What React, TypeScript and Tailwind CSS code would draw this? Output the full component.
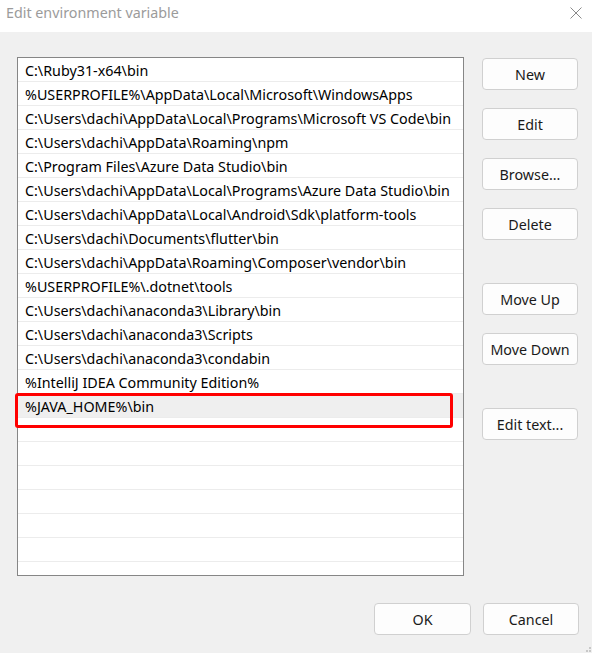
import React from "react";

const paths = [
  "C:\\Ruby31-x64\\bin",
  "%USERPROFILE%\\AppData\\Local\\Microsoft\\WindowsApps",
  "C:\\Users\\dachi\\AppData\\Local\\Programs\\Microsoft VS Code\\bin",
  "C:\\Users\\dachi\\AppData\\Roaming\\npm",
  "C:\\Program Files\\Azure Data Studio\\bin",
  "C:\\Users\\dachi\\AppData\\Local\\Programs\\Azure Data Studio\\bin",
  "C:\\Users\\dachi\\AppData\\Local\\Android\\Sdk\\platform-tools",
  "C:\\Users\\dachi\\Documents\\flutter\\bin",
  "C:\\Users\\dachi\\AppData\\Roaming\\Composer\\vendor\\bin",
  "%USERPROFILE%\\.dotnet\\tools",
  "C:\\Users\\dachi\\anaconda3\\Library\\bin",
  "C:\\Users\\dachi\\anaconda3\\Scripts",
  "C:\\Users\\dachi\\anaconda3\\condabin",
  "%IntelliJ IDEA Community Edition%",
  "%JAVA_HOME%\\bin",
];

const selected = 14;

function Btn({ label, className = "" }: { label: string; className?: string }) {
  return (
    <button
      className={`flex h-[32px] w-[96px] items-center justify-center rounded-[4px] border border-[#d0d0d0] bg-[#fdfdfd] pt-[2px] text-[14.3px] text-[#1a1a1a] ${className}`}
    >
      {label}
    </button>
  );
}

export default function App() {
  return (
    <div
      className="flex h-[653px] w-[592px] flex-col bg-[#f0f0f0]"
      style={{ fontFamily: '"Noto Sans", "Liberation Sans", sans-serif' }}
    >
      {/* title bar */}
      <div className="flex h-[32px] items-start justify-between bg-white pl-[6px] pr-[10px]">
        <span className="pt-[3px] text-[14.3px] leading-[20px] text-[#9b9b9b]">Edit environment variable</span>
        <svg width="12" height="12" viewBox="0 0 12 12" className="mt-[7px]">
          <path d="M0.5 0.5 L11.5 11.5 M11.5 0.5 L0.5 11.5" stroke="#8a8a8a" strokeWidth="1" />
        </svg>
      </div>

      <div className="flex flex-1 flex-col">
        <div className="flex pl-[17px] pt-[25px]">
          {/* list */}
          <div className="relative h-[519px] w-[447px] border border-[#868686] bg-white">
            <div className="flex flex-col">
              {paths.map((p, i) => (
                <div
                  key={i}
                  className={`flex h-[24px] items-center border-b border-[#ececec] pl-[7px] pt-[2px] text-[14.3px] text-black ${
                    i === selected ? "bg-[#efefef]" : ""
                  }`}
                >
                  <span className="whitespace-nowrap">{p}</span>
                </div>
              ))}
              {Array.from({ length: 6 }).map((_, i) => (
                <div key={`e${i}`} className="h-[24px] border-b border-[#ececec]" />
              ))}
            </div>
            {/* annotation */}
            <div className="absolute left-[-3px] top-[335px] h-[35px] w-[438px] rounded-[3px] border-[3px] border-[#ff0000]" />
          </div>

          {/* side buttons */}
          <div className="ml-[18px] flex flex-col pt-[1px]">
            <Btn label="New" />
            <Btn label="Edit" className="mt-[18px]" />
            <Btn label="Browse..." className="mt-[18px]" />
            <Btn label="Delete" className="mt-[18px]" />
            <Btn label="Move Up" className="mt-[43px]" />
            <Btn label="Move Down" className="mt-[18px]" />
            <Btn label="Edit text..." className="mt-[43px]" />
          </div>
        </div>

        <div className="flex justify-end gap-[12px] pr-[13px] pt-[27px]">
          <Btn label="OK" className="w-[97px]" />
          <Btn label="Cancel" />
        </div>

        <div className="relative flex-1">
          <div className="absolute bottom-[1px] right-[1px] grid grid-cols-2 gap-[1px]">
            <span className="h-[2px] w-[2px]" />
            <span className="h-[2px] w-[2px] bg-[#c8c8c8]" />
            <span className="h-[2px] w-[2px] bg-[#c8c8c8]" />
            <span className="h-[2px] w-[2px] bg-[#c8c8c8]" />
          </div>
        </div>
      </div>
    </div>
  );
}
